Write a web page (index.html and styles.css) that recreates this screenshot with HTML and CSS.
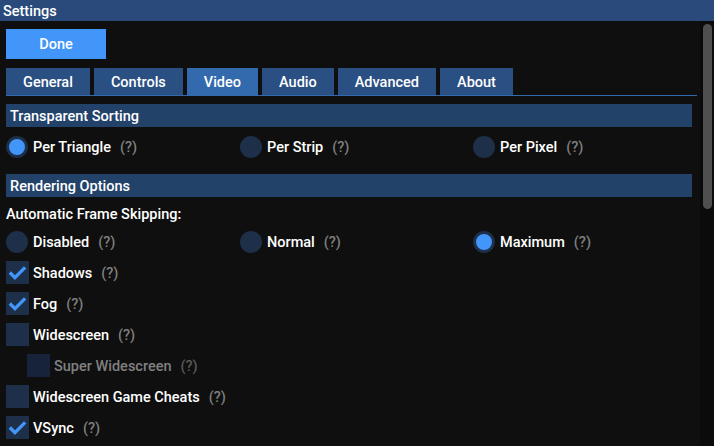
FILE: index.html
```html
<!DOCTYPE html>
<html>
<head>
<meta charset="utf-8">
<link rel="stylesheet" href="styles.css">
</head>
<body>
<div class="titlebar">Settings</div>
<div class="window">
  <div class="content">
    <button class="done">Done</button>
    <div class="tabs">
      <div class="tab">General</div>
      <div class="tab">Controls</div>
      <div class="tab active">Video</div>
      <div class="tab">Audio</div>
      <div class="tab">Advanced</div>
      <div class="tab">About</div>
    </div>

    <div class="header">Transparent Sorting</div>
    <div class="radios">
      <div class="item"><span class="radio on"></span><span class="label">Per Triangle</span><span class="help">(?)</span></div>
      <div class="item"><span class="radio"></span><span class="label">Per Strip</span><span class="help">(?)</span></div>
      <div class="item"><span class="radio"></span><span class="label">Per Pixel</span><span class="help">(?)</span></div>
    </div>

    <div class="header spaced">Rendering Options</div>
    <div class="text">Automatic Frame Skipping:</div>
    <div class="radios">
      <div class="item"><span class="radio"></span><span class="label">Disabled</span><span class="help">(?)</span></div>
      <div class="item"><span class="radio"></span><span class="label">Normal</span><span class="help">(?)</span></div>
      <div class="item"><span class="radio on"></span><span class="label">Maximum</span><span class="help">(?)</span></div>
    </div>

    <div class="item row"><span class="check"><svg viewBox="0 0 23 23"><polyline points="3.85,11.5 8.95,16.6 19.15,6.4"/></svg></span><span class="label">Shadows</span><span class="help">(?)</span></div>
    <div class="item row"><span class="check"><svg viewBox="0 0 23 23"><polyline points="3.85,11.5 8.95,16.6 19.15,6.4"/></svg></span><span class="label">Fog</span><span class="help">(?)</span></div>
    <div class="item row"><span class="check"></span><span class="label">Widescreen</span><span class="help">(?)</span></div>
    <div class="item row indent disabled"><span class="check"></span><span class="label">Super Widescreen</span><span class="help">(?)</span></div>
    <div class="item row"><span class="check"></span><span class="label">Widescreen Game Cheats</span><span class="help">(?)</span></div>
    <div class="item row"><span class="check"><svg viewBox="0 0 23 23"><polyline points="3.85,11.5 8.95,16.6 19.15,6.4"/></svg></span><span class="label">VSync</span><span class="help">(?)</span></div>
  </div>
  <div class="scrollbar"><div class="grab"></div></div>
</div>
</body>
</html>
```
FILE: styles.css
```css
* { box-sizing: border-box; }
html, body { margin: 0; padding: 0; }
body {
  width: 714px;
  height: 446px;
  overflow: hidden;
  background: #0f0f0f;
  color: #ffffff;
  font-family: Roboto, "Liberation Sans", sans-serif;
  font-weight: 500;
  font-size: 14.5px;
  line-height: 17px;
}
.titlebar {
  height: 21px;
  line-height: 21px;
  padding-top: 1px;
  background: #294a7a;
  padding-left: 3px;
}
.window {
  display: flex;
  height: 425px;
}
.content {
  flex: 1;
  padding: 8px 3px 0 6px;
  overflow: hidden;
}
.done {
  display: block;
  width: 100px;
  height: 30px;
  border: 0;
  margin: 0;
  padding: 0;
  background: #4296fa;
  color: #fff;
  font: inherit;
}
.tabs {
  display: flex;
  gap: 4px;
  margin-top: 9px;
  border-bottom: 1px solid #3369ad;
}
.tab {
  height: 27px;
  line-height: 29px;
  padding: 0 17px;
  background: #2a4f82;
}
.tab.active { background: #3369ad; }
.header {
  margin-top: 8px;
  margin-right: 5px;
  height: 23px;
  line-height: 23px;
  padding-top: 1px;
  padding-left: 4px;
  background: #23426a;
}
.header.spaced { margin-top: 16px; }
.text { margin-top: 8px; height: 17px; padding-top: 1px; }
.radios {
  display: grid;
  grid-template-columns: 234px 233px 1fr;
  margin-top: 8px;
}
.item {
  display: flex;
  align-items: center;
  height: 23px;
}
.row { margin-top: 8px; }
.indent { padding-left: 21px; }
.radio {
  width: 22px;
  height: 22px;
  margin: 0 1px 0 0;
  border-radius: 50%;
  background: #1d2f49;
  flex: none;
}
.radio.on {
  background: #4296fa;
  border: 3px solid #1d2f49;
}
.check {
  width: 23px;
  height: 23px;
  background: #1d2f49;
  flex: none;
}
.check svg { display: block; width: 23px; height: 23px; }
.check polyline {
  fill: none;
  stroke: #4296fa;
  stroke-width: 3.4;
}
.label { margin-left: 4px; padding-top: 2px; }
.help { margin-left: 9px; padding-top: 2px; color: #808080; }
.disabled .label { color: #808080; }
.disabled .help { color: #5a5a5a; }
.disabled .check { background: #17233a; }
.scrollbar {
  width: 14px;
  flex: none;
  background: #0b0b0b;
  padding: 3px 2px 0 3px;
}
.grab {
  height: 185px;
  border-radius: 5px;
  background: #4f4f4f;
}
```
